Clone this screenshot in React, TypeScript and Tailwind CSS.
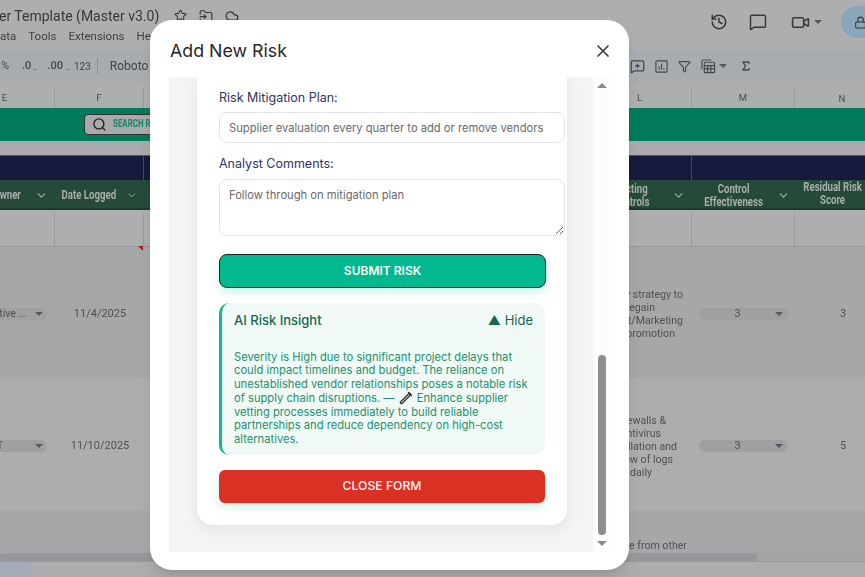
import { ChevronDown, Star, FolderInput, Cloud, History, MessageSquare, Video, Lock, MessageSquarePlus, Filter, Sigma, X, Search } from 'lucide-react';

const sheetFont = "font-['Roboto',sans-serif]";
const cols = 'grid grid-cols-[55px_89px_548px_103px_70px]';

function Caret() {
  return <span className="block h-0 w-0 border-x-[4px] border-t-[4px] border-x-transparent border-t-[#55575a]" />;
}

function HeaderLabel({ children, className = '' }: { children: React.ReactNode; className?: string }) {
  return (
    <span className={`inline-block scale-x-[0.74] text-center text-[13px] leading-[12.5px] font-bold whitespace-nowrap text-[#a9aeab] ${className}`}>
      {children}
    </span>
  );
}

type Note = { text: string; offset: string };

function DataRow({ chip, chipPad, date, notes, score, bg }: { chip: string; chipPad: string; date: string; notes: Note[]; score: string; bg: string }) {
  return (
    <div className={`${cols} h-[132px] items-center pt-[2px] text-[10.6px] text-[#4f5052] ${bg}`}>
      <div className="relative flex h-[12px] w-[47px] items-center justify-end overflow-hidden rounded-r-full bg-[#9ea0a2]">
        <span className={`whitespace-nowrap ${chipPad}`}>{chip}</span>
        <span className="absolute right-[4px]"><Caret /></span>
      </div>
      <div className="pl-[1px] text-center text-[11px]">{date}</div>
      <div className="flex flex-col items-end pr-[9px] leading-[13px]">
        {notes.map((n) => (
          <div key={n.text} className={`whitespace-nowrap ${n.offset}`}>{n.text}</div>
        ))}
      </div>
      <div className="relative mx-[7px] flex h-[12px] items-center justify-center rounded-full bg-[#9ea0a2] text-[11px]">
        <span className="-ml-[12px]">3</span>
        <span className="absolute right-[5px]"><Caret /></span>
      </div>
      <div className="pl-[45px] text-[11px]">{score}</div>
    </div>
  );
}

function Sheet() {
  return (
    <div className={`h-[577px] w-[865px] overflow-hidden bg-[#adaeb0] blur-[0.4px] ${sheetFont}`}>
      {/* title + menus */}
      <div className="flex h-[50px]">
        <div className="flex-1">
          <div className="flex h-[26px] items-end text-[14px] leading-[20px] whitespace-nowrap text-[#37383a]">
            <span className="-ml-[1px]">er Template (Master v3.0)</span>
            <span className="ml-[15px] flex gap-[12px] pb-[3px]">
              <Star size={13} />
              <FolderInput size={14} />
              <Cloud size={14} />
            </span>
          </div>
          <div className="mt-[2px] flex gap-[12px] text-[11.5px] text-[#3f4042]">
            <span>ata</span>
            <span>Tools</span>
            <span>Extensions</span>
            <span>He</span>
          </div>
        </div>
        <div className="flex h-[44px] items-center text-[#37383a]">
          <History size={18} />
          <MessageSquare size={18} className="ml-[21px]" />
          <Video size={19} className="ml-[24px]" />
          <span className="ml-[4px]"><Caret /></span>
          <span className="ml-[19px] flex h-[32px] w-[24px] items-center overflow-hidden rounded-l-full bg-[#8ba6bb] pl-[13px]">
            <Lock size={13} className="shrink-0" />
          </span>
        </div>
      </div>

      {/* toolbar */}
      <div className="flex h-[32px] items-center justify-between bg-[#a8acb0] text-[#44464a]">
        <div className="flex items-center text-[11px]">
          <span className="pl-[1px]">%</span>
          <span className="ml-[13px] font-medium">.0<sub className="text-[8px]">←</sub></span>
          <span className="ml-[8px] font-medium">.00<sub className="text-[8px]">→</sub></span>
          <span className="ml-[3px] text-[10px]">123</span>
          <span className="ml-[6px] h-[16px] w-px bg-[#8f9194]" />
          <span className="ml-[12px] text-[12px]">Roboto</span>
        </div>
        <div className="mr-[113px] flex items-center gap-[10px]">
          <MessageSquarePlus size={15} />
          <svg viewBox="0 0 14 14" className="h-[13px] w-[13px]" fill="none" stroke="currentColor" strokeWidth="1.2">
            <rect x="1" y="1" width="12" height="12" rx="1" />
            <path d="M4.5 10.5V7M7 10.5V4M9.5 10.5V9" />
          </svg>
          <Filter size={13} />
          <span className="flex items-center gap-[3px]">
            <svg viewBox="0 0 16 16" className="h-[15px] w-[15px]" fill="none" stroke="currentColor" strokeWidth="1.2">
              <path d="M1 11V2.5A1.5 1.5 0 0 1 2.5 1H11" />
              <rect x="3.5" y="3.5" width="11" height="11" rx="1" />
              <path d="M3.5 7h11M3.5 10.5h11M7 7v7.5M10.5 7v7.5" />
            </svg>
            <Caret />
          </span>
          <Sigma size={12} strokeWidth={2.6} className="ml-[3px]" />
        </div>
      </div>

      {/* column letters */}
      <div className={`${cols} mt-[6px] h-[20px] items-center text-center text-[9.5px] text-[#4a4b4d]`}>
        <div className="h-full border-r border-[#98999b] pr-[45px] leading-[19px]">E</div>
        <div className="h-full border-r border-[#98999b] leading-[19px]">F</div>
        <div className="h-full border-r border-[#98999b] pr-[49px] text-right leading-[19px]">L</div>
        <div className="h-full border-r border-[#98999b] leading-[19px]">M</div>
        <div className="pl-[24px] leading-[19px]">N</div>
      </div>

      {/* green search band */}
      <div className="flex h-[33px] items-center bg-[#027b5c] pl-[84px]">
        <div className="flex h-[21px] w-[90px] items-center overflow-hidden rounded-[4px] border border-[#333] bg-[#a9a9ab] pl-[7px]">
          <Search size={15} className="shrink-0 text-[#222]" strokeWidth={2.2} />
          <span className="ml-[6px] origin-left scale-x-[0.72] text-[11px] font-bold whitespace-nowrap text-[#16846a]">SEARCH RISKS</span>
        </div>
      </div>
      <div className="h-[14px] bg-[#a9aaac]" />

      {/* navy band */}
      <div className={`${cols} h-[25px] border-t border-[#55565c] bg-[#161a3c]`}>
        <div />
        <div className="border-r border-[#44465c]" />
        <div className="border-r border-[#44465c]" />
        <div />
        <div />
      </div>

      {/* table header */}
      <div className={`${cols} h-[30px] items-center border-b-2 border-[#1d3a2c] bg-[#254a38]`}>
        <div className="flex items-center justify-between overflow-hidden pr-[7px]">
          <HeaderLabel className="-ml-[4px]">wner</HeaderLabel>
          <ChevronDown size={13} className="text-[#a9aeab]" />
        </div>
        <div className="flex items-center justify-between pr-[7px]">
          <HeaderLabel className="-ml-[3px]">Date Logged</HeaderLabel>
          <ChevronDown size={13} className="text-[#a9aeab]" />
        </div>
        <div className="flex items-center justify-end pr-[7px]">
          <HeaderLabel className="mt-[1px] mr-[18px]">
            cting
            <br />
            ntrols
          </HeaderLabel>
          <ChevronDown size={13} className="text-[#a9aeab]" />
        </div>
        <div className="flex items-center justify-between pr-[5px] pl-[2px]">
          <HeaderLabel className="mt-[1px]">
            Control
            <br />
            Effectiveness
          </HeaderLabel>
          <ChevronDown size={13} className="text-[#a9aeab]" />
        </div>
        <div>
          <HeaderLabel className="mt-[1px] -ml-[2px]">
            Residual Risk
            <br />
            Score
          </HeaderLabel>
        </div>
      </div>

      {/* empty row */}
      <div className={`${cols} mt-[3px] h-[34px] border-b border-[#98999b]`}>
        <div className="border-r border-[#98999b]" />
        <div className="relative border-r border-[#98999b]">
          <span className="absolute right-0 -bottom-[5px] h-0 w-0 border-t-[5px] border-l-[5px] border-t-[#a32020] border-l-transparent" />
        </div>
        <div className="border-r border-[#98999b]" />
        <div className="border-r border-[#98999b]" />
        <div />
      </div>

      <DataRow
        bg="bg-[#a6a7a9]"
        chip="tive ..."
        chipPad="pr-[20px]"
        date="11/4/2025"
        notes={[
          { text: 'y strategy to', offset: 'mr-0' },
          { text: 'egain', offset: 'mr-[28px]' },
          { text: 't/Marketing', offset: 'mr-0' },
          { text: 'promotion', offset: 'mr-[8px]' },
        ]}
        score="3"
      />
      <DataRow
        bg="bg-[#adadae]"
        chip="T"
        chipPad="pr-[44px]"
        date="11/10/2025"
        notes={[
          { text: 'ewalls &', offset: 'mr-[17px]' },
          { text: 'ntivirus', offset: 'mr-[22px]' },
          { text: 'llation and', offset: 'mr-[6px]' },
          { text: 'ew of logs', offset: 'mr-[10px]' },
          { text: 'daily', offset: 'mr-[31px]' },
        ]}
        score="5"
      />

      {/* last row, cut by the scrollbar */}
      <div className="h-[42px] bg-[#a6a7a9] text-[10.6px] text-[#4f5052]">
        <div className="pt-[27px] pl-[629px] whitespace-nowrap">e from other</div>
      </div>
      <div className="h-[8px] bg-[#a3a4a6]">
        <div className="h-full w-[757px] rounded-full bg-[#96979a]" />
      </div>
      <div className="h-[16px] border-t border-[#98999b] bg-[#abacae]">
        <div className="h-full w-[31px] bg-[#a3abb9]" />
      </div>
    </div>
  );
}

function Wrench() {
  return (
    <svg viewBox="0 0 14 14" className="mx-[1px] inline-block h-[14px] w-[14px] align-[-3px]">
      <path d="M2.5 11.5 10.5 3.5" stroke="#222" strokeWidth="3.4" strokeLinecap="round" />
      <path d="M2.5 11.5 10.5 3.5" stroke="#a5a5a5" strokeWidth="1.6" strokeLinecap="round" />
      <path d="M9.5 1.6 12.4 4.5" stroke="#222" strokeWidth="1.4" strokeLinecap="round" />
    </svg>
  );
}

function AddRiskModal() {
  return (
    <div className="absolute top-[20px] left-[150px] flex h-[550px] w-[479px] flex-col overflow-hidden rounded-[22px] bg-white font-['Inter',sans-serif] shadow-lg">
      <div className="flex h-[57px] shrink-0 items-center justify-between pt-[5px] pr-[16px] pl-[20px]">
        <h2 className="text-[17.8px] font-normal text-[#26282b]">Add New Risk</h2>
        <X size={20} className="text-[#37393c]" strokeWidth={2} />
      </div>

      <div className="mx-[19px] flex h-[475px] shrink-0">
        <div className="flex w-[425px] flex-col justify-end overflow-hidden bg-[#f3f4f6] pb-[27px] pl-[28px]">
          <div className="flex w-[370px] flex-col rounded-b-[16px] bg-white pt-[14px] pr-[2px] pb-[22px] pl-[22px] shadow-[0_4px_14px_rgba(0,0,0,0.08)]">
            <label className="text-[12.5px] leading-[13px] text-[#2c3566]">Risk Mitigation Plan:</label>
            <input
              readOnly
              value="Supplier evaluation every quarter to add or remove vendors"
              className="mt-[8px] h-[31px] w-[346px] rounded-[8px] border border-[#e2e3e6] bg-white px-[9px] text-[11.2px] text-[#68696c] outline-none"
            />
            <label className="mt-[14px] text-[12.5px] leading-[13px] text-[#2c3566]">Analyst Comments:</label>
            <textarea
              readOnly
              value="Follow through on mitigation plan"
              className="mt-[9px] block h-[57px] w-[346px] rounded-[8px] border border-[#e2e3e6] bg-white px-[9px] py-[7px] text-[11.2px] text-[#68696c] outline-none"
            />
            <button className="mt-[18px] h-[34px] w-[327px] rounded-[8px] border-[1.5px] border-[#1c2320] bg-[#00b98e] text-[12px] font-semibold text-white shadow-[0_4px_10px_rgba(0,185,142,0.2)]">
              SUBMIT RISK
            </button>
            <div className="mt-[15px] h-[152px] w-[326px] rounded-[10px] border-l-[3px] border-[#10b98a] bg-[#f0f9f6] pt-[8px] pr-[12px] pl-[12px]">
              <div className="flex items-center justify-between text-[13px] font-medium text-[#13684f]">
                <span>AI Risk Insight</span>
                <span className="font-normal">▲ Hide</span>
              </div>
              <p className="mt-[20px] text-[11.2px] leading-[13.5px] text-[#23916f]">
                Severity is High due to significant project delays that could impact timelines and budget. The reliance on unestablished vendor relationships poses a notable risk of supply chain disruptions. — <Wrench /> Enhance supplier vetting processes immediately to build reliable partnerships and reduce dependency on high-cost alternatives.
              </p>
            </div>
            <button className="mt-[15px] h-[33px] w-[326px] rounded-[6px] bg-[#db3024] text-[12.2px] font-medium text-white shadow-[0_4px_10px_rgba(16,185,142,0.2)]">
              CLOSE FORM
            </button>
          </div>
        </div>
        <div className="flex w-[17px] flex-col items-center bg-[#fcfcfc]">
          <span className="mt-[6px] h-0 w-0 border-x-[5px] border-b-[5px] border-x-transparent border-b-[#8a8a8a]" />
          <span className="mt-[267px] h-[180px] w-[8px] rounded-full bg-[#8e8e8e]" />
          <span className="mt-[6px] h-0 w-0 border-x-[5px] border-t-[5px] border-x-transparent border-t-[#8a8a8a]" />
        </div>
      </div>
    </div>
  );
}

export default function App() {
  return (
    <div className="relative h-[577px] w-[865px] overflow-hidden">
      <Sheet />
      <AddRiskModal />
    </div>
  );
}
